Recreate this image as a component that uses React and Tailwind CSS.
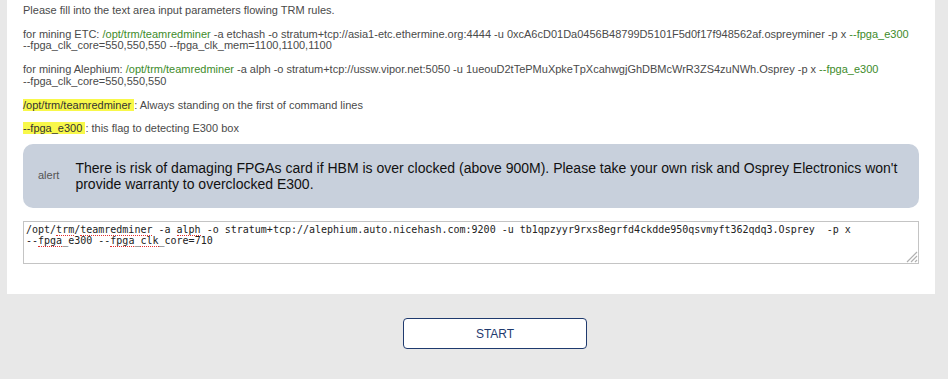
const Sp = ({ children }) => (
  <span className="border-b border-dotted border-[#e03030]">{children}</span>
)

const App = () => {
  return (
    <div className="min-h-[379px] w-full bg-[#e8e8e8] font-['Liberation_Sans',Arial,sans-serif]">
      <div className="ml-[7px] w-[928px] bg-white px-4 pt-[5px] pb-[30px] text-[11px] leading-[11.5px] text-[#4a4a4a]">
        <p className="mb-[12px]">Please fill into the text area input parameters flowing TRM rules.</p>
        <p className="mb-[12.5px]">
          for mining ETC: <span className="text-[#3d8b2a]">/opt/trm/teamredminer</span> -a etchash -o stratum+tcp://asia1-etc.ethermine.org:4444 -u 0xcA6cD01Da0456B48799D5101F5d0f17f948562af.ospreyminer -p x <span className="text-[#3d8b2a]">--fpga_e300</span>
          <br />
          --fpga_clk_core=550,550,550 --fpga_clk_mem=1100,1100,1100
        </p>
        <p className="mb-[12.5px]">
          for mining Alephium: <span className="text-[#3d8b2a]">/opt/trm/teamredminer</span> -a alph -o stratum+tcp://ussw.vipor.net:5050 -u 1ueouD2tTePMuXpkeTpXcahwgjGhDBMcWrR3ZS4zuNWh.Osprey -p x <span className="text-[#3d8b2a]">--fpga_e300</span>
          <br />
          --fpga_clk_core=550,550,550
        </p>
        <p className="mb-[11.5px]">
          <span className="bg-[#f8f84a] text-[#333]">/opt/trm/teamredminer </span>: Always standing on the first of command lines
        </p>
        <p className="mb-[10px]">
          <span className="bg-[#f8f84a] text-[#333]">--fpga_e300 </span>: this flag to detecting E300 box
        </p>

        <div className="flex items-center rounded-[10px] bg-[#c8d0dc] py-4 pr-5 pl-[15px]">
          <span className="mr-4 shrink-0 text-[11px] text-[#555]">alert</span>
          <p className="text-[14px] leading-[16px] text-[#111]">
            There is risk of damaging FPGAs card if HBM is over clocked (above 900M). Please take your own risk and Osprey Electronics won't provide warranty to overclocked E300.
          </p>
        </div>

        <div className="relative mt-[13px] h-[43px] border border-[#c4c4c4] px-[2px] pt-[2px] font-['DejaVu_Sans_Mono',monospace] text-[10px] leading-[11px] whitespace-pre-wrap text-[#222]">
          /opt/<Sp>trm</Sp>/<Sp>teamredminer</Sp> -a <Sp>alph</Sp> -o stratum+tcp://alephium.auto.nicehash.com:9200 -u tb1qpzyyr9rxs8egrfd4ckdde950qsvmyft362qdq3.Osprey  -p x <span className="whitespace-nowrap">--<Sp>fpga</Sp>_e300</span> <span className="whitespace-nowrap">--<Sp>fpga</Sp>_<Sp>clk</Sp>_core=710</span>
          <svg className="absolute right-0 bottom-0" width="14" height="14" viewBox="0 0 14 14">
            <path d="M13 3 L3 13 M13 7 L7 13 M13 11 L11 13" stroke="#b0b0b0" strokeWidth="1.2" />
          </svg>
        </div>
      </div>

      <div className="flex pt-[24px] pl-[403px]">
        <button className="h-[31px] w-[184px] rounded-[4px] border border-[#1f3a6e] bg-white text-[12px] text-[#1f3a6e]">
          START
        </button>
      </div>
    </div>
  )
}

export default App
